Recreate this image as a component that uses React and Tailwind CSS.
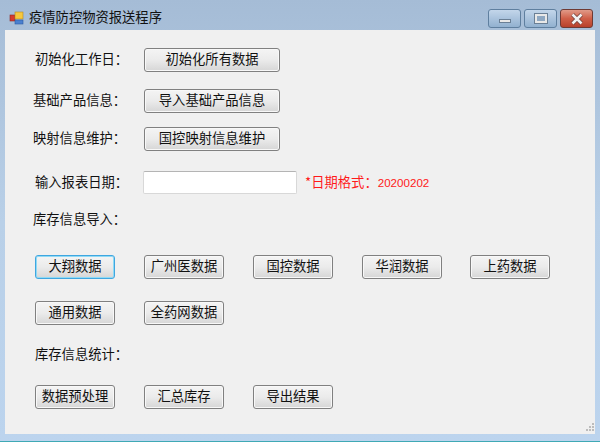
const F = '"Noto Sans CJK SC", sans-serif';

function Btn({ children, w = 'w-[80px]', focus = false, h = 'h-[24px]' }) {
  return (
    <div
      className={`${w} ${h} shrink-0 flex items-center justify-center rounded-[3px] border pb-[2px] text-[13.3px] leading-none text-[#111] bg-gradient-to-b from-[#f4f4f4] via-[#ebebeb] to-[#d6d6d6] ${
        focus ? 'border-[#3fa6e0] shadow-[inset_0_0_0_1px_#90daf5]' : 'border-[#808080] shadow-[inset_0_0_0_1px_#f8f8f8]'
      }`}
    >
      {children}
    </div>
  );
}

function Label({ children, w, ml }) {
  return <div className={`${ml} ${w} shrink-0 pb-[2px] text-[13.3px] leading-none text-[#111] whitespace-nowrap`}>{children}</div>;
}

function CaptionBtn({ w, className, children }) {
  return (
    <div className={`${w} h-[19px] rounded-[3px] border flex items-center justify-center ${className}`}>{children}</div>
  );
}

export default function App() {
  return (
    <div className="w-[600px] h-[442px] overflow-hidden flex flex-col bg-gradient-to-b from-[#a5bcd6] via-[#b9d0e8] to-[#bcd4ee]" style={{ fontFamily: F }}>
      <div className="h-[30px] shrink-0 flex items-start">
        <svg width="16" height="16" viewBox="0 0 16 16" className="ml-[9px] mt-[10px] shrink-0">
          <rect x="1" y="5" width="5" height="6" fill="#d83a2e" stroke="#8a2a22" strokeWidth="0.6" />
          <rect x="6" y="2" width="8" height="7" fill="#f6c83e" stroke="#b58a20" strokeWidth="0.6" />
          <rect x="6" y="10" width="8" height="4" fill="#4a80d0" stroke="#2d5aa0" strokeWidth="0.6" />
        </svg>
        <div className="ml-[4px] mt-[8px] text-[13.3px] leading-[18px] text-[#111] whitespace-nowrap">疫情防控物资报送程序</div>
        <div className="ml-auto mr-[7px] mt-[9px] flex gap-[3px]">
          <CaptionBtn w="w-[33px]" className="border-[#5f7f9f] bg-gradient-to-b from-[#c3d6ea] via-[#aac3dd] to-[#92b1d0]">
            <div className="w-[12px] h-[4px] mt-[5px] bg-[#e8e8e8] border border-[#6a7f95]" />
          </CaptionBtn>
          <CaptionBtn w="w-[33px]" className="border-[#5f7f9f] bg-gradient-to-b from-[#c3d6ea] via-[#aac3dd] to-[#92b1d0]">
            <div className="w-[12px] h-[9px] border-2 border-[#e8e8e8] outline outline-1 outline-[#6a7f95] bg-[#8fa8c2]" />
          </CaptionBtn>
          <CaptionBtn w="w-[33px]" className="border-[#6e3a34] bg-gradient-to-b from-[#e09a88] via-[#cf5f48] to-[#b8412c]">
            <svg width="14" height="12" viewBox="0 0 14 12">
              <path d="M2.5 1.5 L11.5 10.5 M11.5 1.5 L2.5 10.5" stroke="#6e3a34" strokeWidth="4" />
              <path d="M2.5 1.5 L11.5 10.5 M11.5 1.5 L2.5 10.5" stroke="#f2f2f2" strokeWidth="2.6" />
            </svg>
          </CaptionBtn>
        </div>
      </div>

      <div className="mx-[5px] w-[590px] h-[404px] shrink-0 relative bg-[#f0f0f0]">
        <div className="flex flex-col pt-[18px]">
          <div className="flex items-center h-[24px]">
            <Label ml="ml-[30px]" w="w-[109px]">初始化工作日：</Label>
            <Btn w="w-[136px]">初始化所有数据</Btn>
          </div>
          <div className="flex items-center h-[24px] mt-[17px]">
            <Label ml="ml-[28px]" w="w-[111px]">基础产品信息：</Label>
            <Btn w="w-[136px]">导入基础产品信息</Btn>
          </div>
          <div className="flex items-center h-[24px] mt-[14px]">
            <Label ml="ml-[28px]" w="w-[111px]">映射信息维护：</Label>
            <Btn w="w-[136px]">国控映射信息维护</Btn>
          </div>
          <div className="flex items-center h-[23px] mt-[20px]">
            <Label ml="ml-[30px]" w="w-[108px]">输入报表日期：</Label>
            <div className="w-[154px] h-[23px] shrink-0 bg-white border border-[#d8d8d8] border-t-[#b4b4b4] rounded-[2px]" />
            <div className="ml-[8px] pb-[2px] text-[13.3px] leading-none text-[#ff1a1a] whitespace-nowrap">
              *日期格式：<span className="text-[11.6px]" style={{ fontFamily: '"Liberation Sans", sans-serif' }}>20200202</span>
            </div>
          </div>
          <div className="flex items-center h-[18px] mt-[17px]">
            <Label ml="ml-[28px]">库存信息导入：</Label>
          </div>
          <div className="flex gap-[29px] ml-[30px] mt-[26px]">
            <Btn focus>大翔数据</Btn>
            <Btn>广州医数据</Btn>
            <Btn>国控数据</Btn>
            <Btn>华润数据</Btn>
            <Btn w="w-[80px] -ml-[1px]">上药数据</Btn>
          </div>
          <div className="flex gap-[29px] ml-[30px] mt-[22px]">
            <Btn>通用数据</Btn>
            <Btn>全药网数据</Btn>
          </div>
          <div className="flex items-center h-[18px] mt-[21px]">
            <Label ml="ml-[30px]">库存信息统计：</Label>
          </div>
          <div className="flex gap-[29px] ml-[30px] mt-[21px]">
            <Btn>数据预处理</Btn>
            <Btn>汇总库存</Btn>
            <Btn>导出结果</Btn>
          </div>
        </div>
        <svg width="12" height="12" viewBox="0 0 12 12" className="absolute right-0 bottom-0">
          {[[9, 1], [9, 4], [6, 4], [9, 7], [6, 7], [3, 7]].map(([x, y]) => (
            <rect key={`${x}-${y}`} x={x} y={y} width="2" height="2" fill="#bcbcbc" />
          ))}
        </svg>
      </div>
      <div className="mt-auto h-[1px] bg-[#3fa9b5]" />
    </div>
  );
}
